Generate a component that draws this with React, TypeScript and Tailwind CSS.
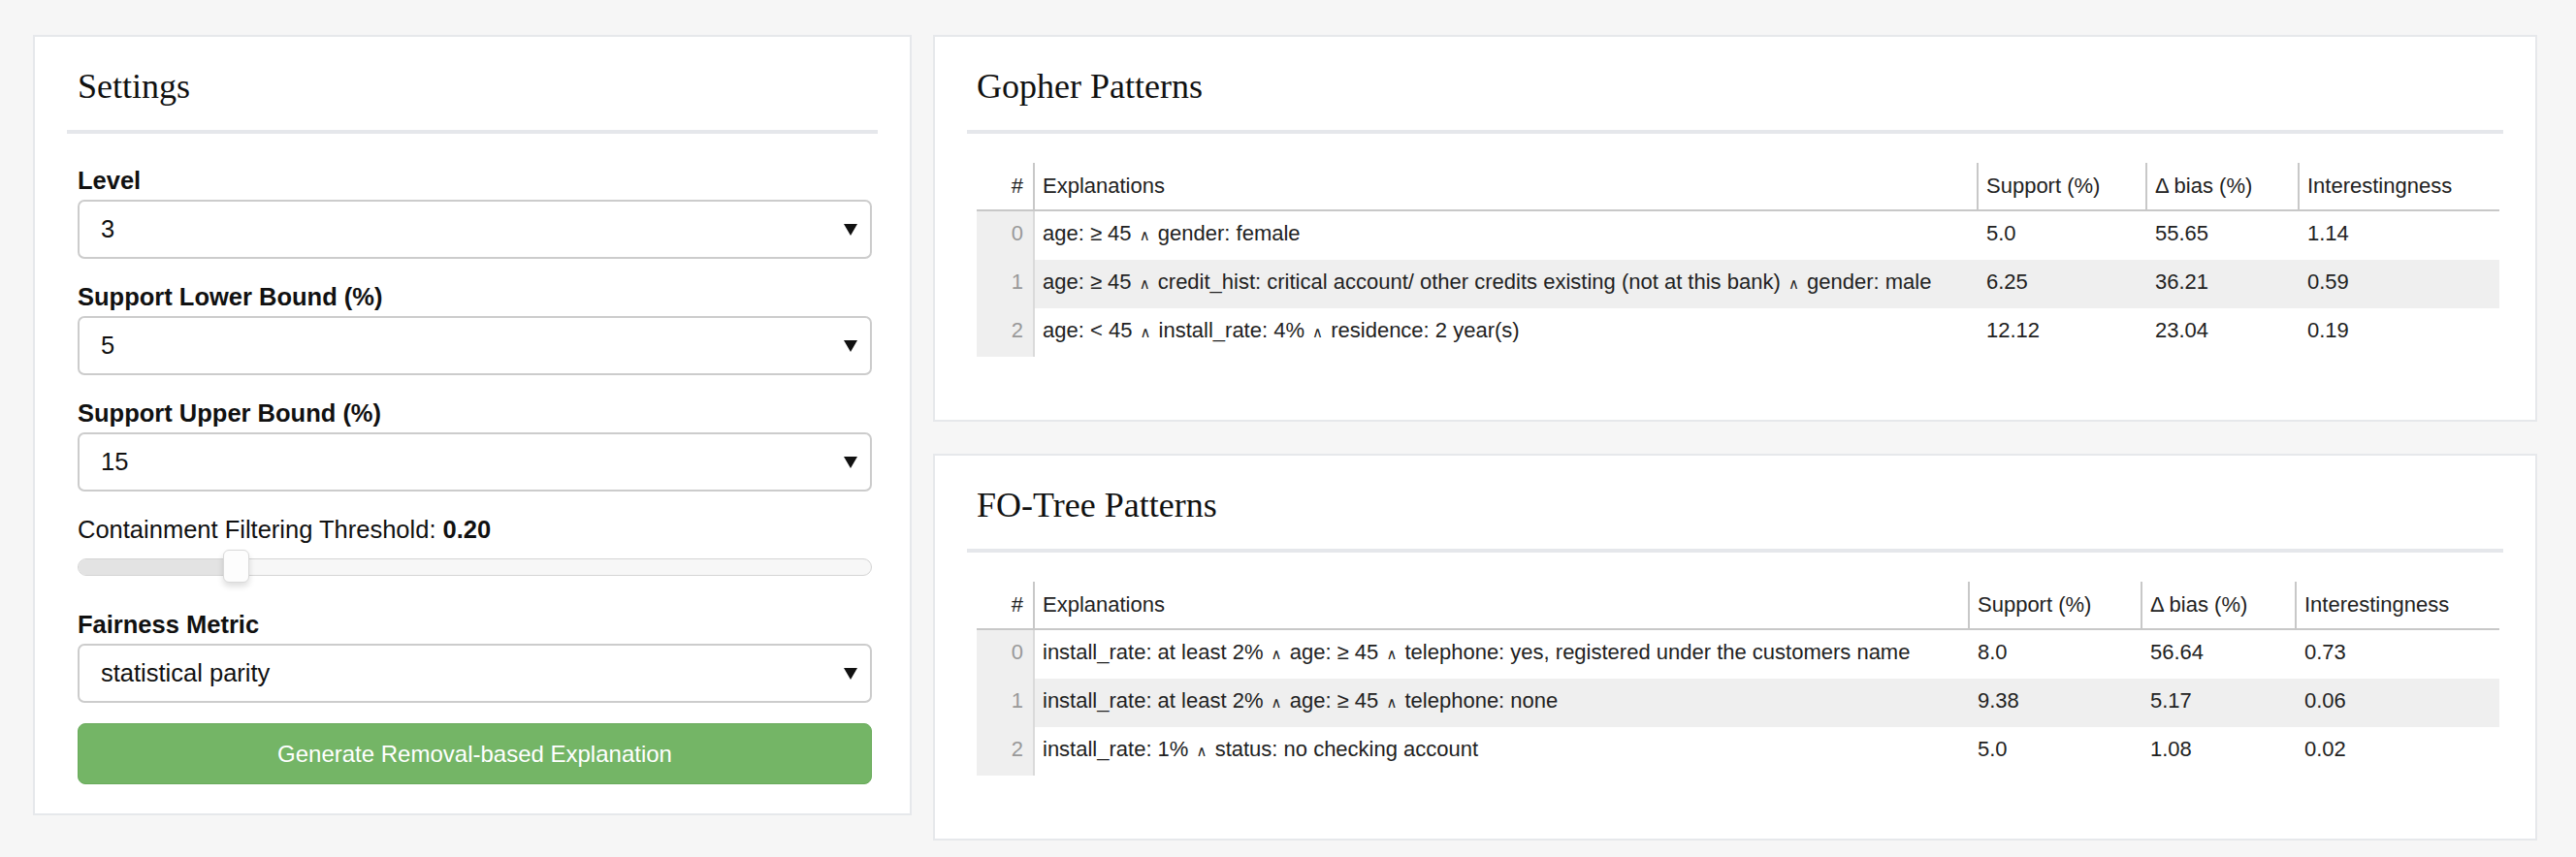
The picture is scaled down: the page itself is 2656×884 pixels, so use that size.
import React from "react";

const SANS = "font-['Liberation_Sans',Arial,Helvetica,sans-serif]";
const SERIF = "font-['Liberation_Serif','Times_New_Roman',serif]";

function Label({ children }: { children: React.ReactNode }) {
  return <div className="text-[25.5px] font-bold leading-[29px] text-[#111]">{children}</div>;
}

function SelectBox({ value }: { value: string }) {
  return (
    <div className="mt-[5px] flex h-[61px] items-center justify-between rounded-[7px] border-2 border-[#cccccc] bg-white pl-[22px] pr-[13px] text-[25.5px] text-[#111]">
      <span>{value}</span>
      <svg width="14" height="12" viewBox="0 0 14 12">
        <path d="M0 0H14L7 12Z" fill="#111" />
      </svg>
    </div>
  );
}

function Wedge() {
  return <span className="px-[2px] font-['DejaVu_Sans',sans-serif] text-[15px] leading-none">∧</span>;
}

function Expl({ text }: { text: string }) {
  const parts = text.split("∧");
  return (
    <>
      {parts.map((p, i) => (
        <React.Fragment key={i}>
          {i > 0 && <Wedge />}
          {p}
        </React.Fragment>
      ))}
    </>
  );
}

type Row = [string, string, string, string];

function PatternCard({ title, rows, widths }: { title: string; rows: Row[]; widths: string[] }) {
  return (
    <div className="border-2 border-[#e6e8eb] bg-white px-[33px] pt-[31px] pb-[65px]">
      <h2 className={`${SERIF} pl-[10px] text-[36px] leading-[40px] text-[#111]`}>{title}</h2>
      <div className="mt-[25px] h-[4px] bg-[#e5e7eb]" />
      <div className="mt-[30px] pl-[10px] pr-[4px]">
        <table className="w-full table-fixed border-separate border-spacing-0 text-[22px] leading-[25px] text-[#222]">
          <thead>
            <tr>
              <th className={`${widths[0]} border-b-2 border-r-2 border-[#c8c8c8] pr-[10px] pt-[11px] pb-[12px] text-right font-normal`}>#</th>
              <th className={`${widths[1]} border-b-2 border-[#c8c8c8] pl-[8px] pt-[11px] pb-[12px] text-left font-normal`}>Explanations</th>
              <th className={`${widths[2]} border-b-2 border-l-2 border-[#c8c8c8] pl-[8px] pt-[11px] pb-[12px] text-left font-normal`}>Support (%)</th>
              <th className={`${widths[3]} border-b-2 border-l-2 border-[#c8c8c8] pl-[8px] pt-[11px] pb-[12px] text-left font-normal`}>Δ bias (%)</th>
              <th className={`${widths[4]} border-b-2 border-l-2 border-[#c8c8c8] pl-[8px] pt-[11px] pb-[12px] text-left font-normal`}>Interestingness</th>
            </tr>
          </thead>
          <tbody>
            {rows.map((r, i) => (
              <tr key={i} className={i === 1 ? "bg-[#efefef]" : ""}>
                <td className="border-r-2 border-[#dadada] bg-[#efefef] pr-[10px] pt-[10px] pb-[15px] text-right text-[#999]">{i}</td>
                <td className="whitespace-nowrap pl-[8px] pt-[10px] pb-[15px]"><Expl text={r[0]} /></td>
                <td className="pl-[10px] pt-[10px] pb-[15px]">{r[1]}</td>
                <td className="pl-[10px] pt-[10px] pb-[15px]">{r[2]}</td>
                <td className="pl-[10px] pt-[10px] pb-[15px]">{r[3]}</td>
              </tr>
            ))}
          </tbody>
        </table>
      </div>
    </div>
  );
}

const gopher: Row[] = [
  ["age: ≥ 45 ∧ gender: female", "5.0", "55.65", "1.14"],
  ["age: ≥ 45 ∧ credit_hist: critical account/ other credits existing (not at this bank) ∧ gender: male", "6.25", "36.21", "0.59"],
  ["age: < 45 ∧ install_rate: 4% ∧ residence: 2 year(s)", "12.12", "23.04", "0.19"],
];

const fotree: Row[] = [
  ["install_rate: at least 2% ∧ age: ≥ 45 ∧ telephone: yes, registered under the customers name", "8.0", "56.64", "0.73"],
  ["install_rate: at least 2% ∧ age: ≥ 45 ∧ telephone: none", "9.38", "5.17", "0.06"],
  ["install_rate: 1% ∧ status: no checking account", "5.0", "1.08", "0.02"],
];

export default function App() {
  return (
    <div className={`${SANS} flex min-h-screen items-start gap-[22px] bg-[#f6f6f6] pl-[34px] pr-[40px] pt-[36px] pb-[17px]`}>
      <div className="w-[906px] shrink-0 border-2 border-[#e6e8eb] bg-white px-[33px] pt-[31px] pb-[30px]">
        <h2 className={`${SERIF} pl-[11px] text-[36px] leading-[40px] text-[#111]`}>Settings</h2>
        <div className="mt-[25px] h-[4px] bg-[#e5e7eb]" />
        <div className="mt-[34px] flex flex-col pl-[11px] pr-[6px]">
          <Label>Level</Label>
          <SelectBox value="3" />
          <div className="mt-[25px]">
            <Label>Support Lower Bound (%)</Label>
          </div>
          <SelectBox value="5" />
          <div className="mt-[25px]">
            <Label>Support Upper Bound (%)</Label>
          </div>
          <SelectBox value="15" />
          <div className="mt-[25px] text-[25.5px] leading-[29px] text-[#111]">
            Containment Filtering Threshold: <span className="font-bold">0.20</span>
          </div>
          <div className="relative mt-[15px] h-[18px] rounded-full border-[1.5px] border-[#d4d4d4] bg-[#f7f7f7]">
            <div className="absolute inset-y-0 left-0 w-[163px] rounded-l-full bg-[#e3e3e3]" />
            <div className="absolute left-[149px] top-[-10px] h-[34px] w-[27px] rounded-[6px] border border-[#d9d9d9] bg-[#fdfdfd] shadow-[0_4px_6px_rgba(0,0,0,0.13)]" />
          </div>
          <div className="mt-[36px]">
            <Label>Fairness Metric</Label>
          </div>
          <SelectBox value="statistical parity" />
          <button className="mt-[21px] flex h-[63px] items-center justify-center rounded-[8px] border border-[#69aa5b] bg-[#74b566] text-[24px] text-white">
            Generate Removal-based Explanation
          </button>
        </div>
      </div>
      <div className="flex flex-1 flex-col gap-[33px]">
        <PatternCard title="Gopher Patterns" rows={gopher} widths={["w-[60px]", "", "w-[174px]", "w-[157px]", "w-[208px]"]} />
        <PatternCard title="FO-Tree Patterns" rows={fotree} widths={["w-[60px]", "", "w-[178px]", "w-[159px]", "w-[211px]"]} />
      </div>
    </div>
  );
}
